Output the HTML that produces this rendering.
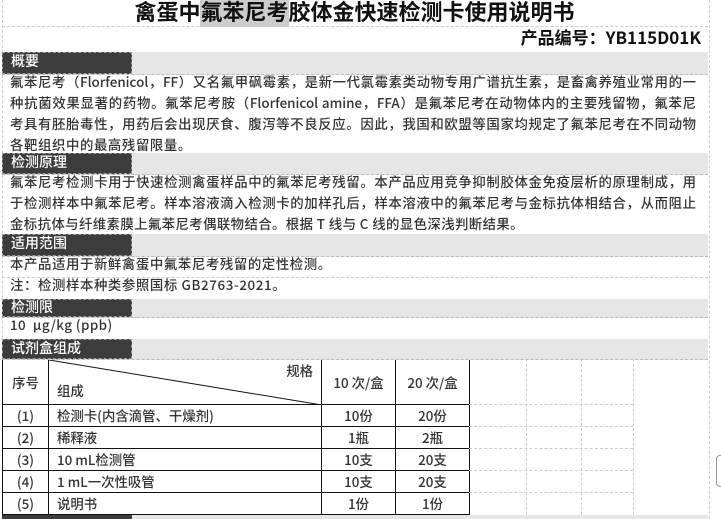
<!DOCTYPE html>
<html><head><meta charset="utf-8"><style>
body{margin:0;width:721px;height:519px;background:#fff;position:relative;overflow:hidden;font-family:"Noto Sans CJK SC","Liberation Sans",sans-serif;color:#333}
.a{position:absolute}
.t{font-size:22px;font-weight:bold;color:#111;left:0;width:709px;text-align:center;top:-2px;line-height:27px}
.pn{font-size:17px;font-weight:bold;color:#111;right:20px;top:25px;line-height:24px}
.hb{position:absolute;left:2px;width:706px;background:#e6e6e6;border-bottom:1px dashed #bbb;z-index:2}
.hd{position:absolute;left:0;top:0;bottom:0;width:130px;background:#3c3c3c;color:#fff;font-size:14px;font-weight:500;padding-left:8px;box-sizing:border-box;border:1px dashed #999;line-height:17px}
.ln{position:absolute;left:10px;width:686px;font-size:13.4px;font-weight:500;line-height:21px;text-align:justify;text-align-last:justify;white-space:nowrap}
.ln.n{text-align-last:left}
.dl{position:absolute;left:2px;width:706px;border-top:1px dashed #ccc}
table{position:absolute;left:2px;top:359px;border-collapse:collapse;font-size:13.4px;font-weight:500;color:#333}
td{border:1.5px solid #111;padding:0;text-align:center;height:21px;line-height:17px}
.g{position:absolute;border-left:1px dashed #ccc;top:359px;height:156px}
.gh{position:absolute;border-top:1px dashed #ccc;left:469px;width:164px}
</style></head><body>
<div class="a" style="left:2px;top:0;width:706px;height:519px;border-left:1px dashed #ccc;border-right:1px dashed #ccc"></div>
<div class="a t">禽蛋中<span style="background:#ccc">氟苯尼考</span>胶体金快速检测卡使用说明书</div>
<div class="dl" style="top:26px"></div>
<div class="a pn">产品编号：YB115D01K</div>
<div class="hb" style="top:52px;height:22px"><div class="hd">概要</div></div>
<div class="ln" style="top:71px">氟苯尼考（Florfenicol，FF）又名氟甲砜霉素，是新一代氯霉素类动物专用广谱抗生素，是畜禽养殖业常用的一</div>
<div class="ln" style="top:92px">种抗菌效果显著的药物。氟苯尼考胺（Florfenicol amine，FFA）是氟苯尼考在动物体内的主要残留物，氟苯尼</div>
<div class="ln" style="top:113px">考具有胚胎毒性，用药后会出现厌食、腹泻等不良反应。因此，我国和欧盟等国家均规定了氟苯尼考在不同动物</div>
<div class="ln n" style="top:134px;letter-spacing:0.6px">各靶组织中的最高残留限量。</div>
<div class="hb" style="top:153px;height:21px"><div class="hd">检测原理</div></div>
<div class="ln" style="top:171px">氟苯尼考检测卡用于快速检测禽蛋样品中的氟苯尼考残留。本产品应用竞争抑制胶体金免疫层析的原理制成，用</div>
<div class="ln" style="top:192px">于检测样本中氟苯尼考。样本溶液滴入检测卡的加样孔后，样本溶液中的氟苯尼考与金标抗体相结合，从而阻止</div>
<div class="ln n" style="top:213px;letter-spacing:0.4px">金标抗体与纤维素膜上氟苯尼考偶联物结合。根据 T 线与 C 线的显色深浅判断结果。</div>
<div class="hb" style="top:234px;height:22px"><div class="hd">适用范围</div></div>
<div class="ln n" style="top:253px;letter-spacing:0.6px">本产品适用于新鲜禽蛋中氟苯尼考残留的定性检测。</div>
<div class="dl" style="top:277px"></div>
<div class="ln n" style="top:274px;letter-spacing:0.6px">注：检测样本种类参照国标 GB2763-2021。</div>
<div class="hb" style="top:299px;height:18px"><div class="hd" style="line-height:14px">检测限</div></div>
<div class="ln n" style="top:314px;letter-spacing:0.4px">10 &nbsp;μg/kg (ppb)</div>
<div class="hb" style="top:339px;height:20px"><div class="hd" style="line-height:16px">试剂盒组成</div></div>
<table>
<tr style="height:45px"><td style="width:45px">序号</td><td style="width:272px;position:relative;text-align:left">
<svg style="position:absolute;left:0;top:0" width="273" height="45"><line x1="0" y1="0" x2="273" y2="45" stroke="#111" stroke-width="1"/></svg>
<span style="position:absolute;right:8px;top:2px">规格</span><span style="position:absolute;left:8px;top:22px">组成</span></td><td style="width:73px">10 次/盒</td><td style="width:73px">20 次/盒</td></tr>
<tr><td>(1)</td><td style="text-align:left;padding-left:8px">检测卡(内含滴管、干燥剂)</td><td>10份</td><td>20份</td></tr>
<tr><td>(2)</td><td style="text-align:left;padding-left:8px">稀释液</td><td>1瓶</td><td>2瓶</td></tr>
<tr><td>(3)</td><td style="text-align:left;padding-left:8px">10 mL检测管</td><td>10支</td><td>20支</td></tr>
<tr><td>(4)</td><td style="text-align:left;padding-left:8px">1 mL一次性吸管</td><td>10支</td><td>20支</td></tr>
<tr><td>(5)</td><td style="text-align:left;padding-left:8px">说明书</td><td>1份</td><td>1份</td></tr>
</table>
<div class="g" style="left:526px"></div><div class="g" style="left:581px"></div><div class="g" style="left:633px"></div>
<div class="gh" style="top:404px"></div><div class="gh" style="top:426px"></div><div class="gh" style="top:448px"></div><div class="gh" style="top:470px"></div><div class="gh" style="top:492px"></div>
<div class="a" style="left:2px;top:515px;width:706px;height:4px;background:#e6e6e6"></div>
<div class="a" style="left:2px;top:515px;width:130px;height:4px;background:#3c3c3c"></div>
<div class="a" style="left:716px;top:455px;width:8px;height:30px;border:1px solid #999;border-radius:4px"></div>
</body></html>
